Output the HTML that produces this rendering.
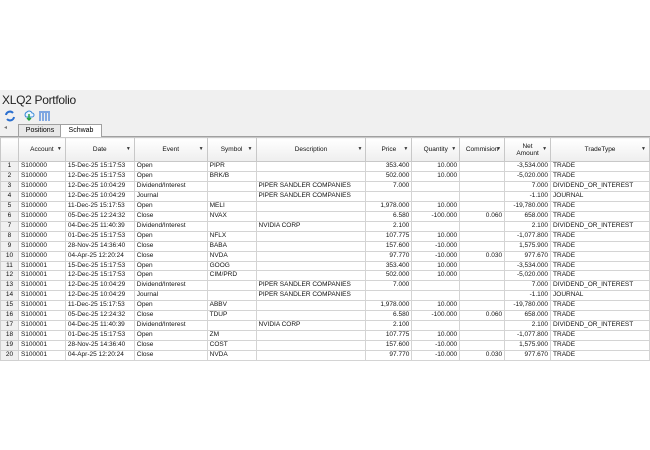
<!DOCTYPE html><html><head><style>
body{margin:0;width:650px;height:450px;background:#fff;font-family:"Liberation Sans",sans-serif;position:relative;overflow:hidden}
.app{position:absolute;left:0;top:90px;width:650px;height:270px;background:#f0f0f0}
.title{position:absolute;left:2px;top:93px;font-size:12px;color:#222;letter-spacing:-0.3px}
.tabs{position:absolute;left:0;top:123px;height:13px;width:650px;border-bottom:1px solid #a0a0a0}
.tab{position:absolute;top:1px;height:11px;font-size:7px;line-height:11px;text-align:center;border:1px solid #a0a0a0;border-bottom:none}
table{position:absolute;left:0;top:137px;border-collapse:collapse;font-size:6.5px;color:#111;table-layout:fixed;background:#fff}
td{border:1px solid #d4d4d4;height:8.95px;padding:0 2px;white-space:nowrap;overflow:hidden;line-height:8.95px}
th{height:23px;border:1px solid #c8c8c8;font-weight:normal;background:linear-gradient(#fff,#eee);position:relative;font-size:6.5px;padding:0}
th span.a{position:absolute;right:3px;top:8px;font-size:5px;color:#333}
td.n{text-align:center;background:#f0f0f0;border-color:#d0d0d0}
.r{text-align:right}
</style></head><body>
<div class="app"></div>
<div class="title">XLQ2 Portfolio</div>
<svg style="position:absolute;left:4px;top:110px" width="50" height="12">
<path d="M2 5a4 4 0 0 1 7-2M10 7a4 4 0 0 1-7 2" stroke="#2a6fd0" stroke-width="2" fill="none"/>
<path d="M22 7a3 3 0 0 1 1-5a3 3 0 0 1 5 1a2 2 0 0 1 0 4z" fill="#eaf6ff" stroke="#3a8ad8" stroke-width="1"/>
<path d="M25 4v6M23 8l2 2l2-2" stroke="#1fa040" stroke-width="1.4" fill="none"/>
<path d="M35 2h11M36 3v8M39 3v8M42 3v8M45 3v8" stroke="#3a7ad8" stroke-width="1.2"/>
</svg>
<div class="tabs">
<span style="position:absolute;left:4px;top:1px;font-size:6px;color:#777">◂</span>
<div class="tab" style="left:18px;width:42px;background:#e8e8e8">Positions</div>
<div class="tab" style="left:60px;width:40px;background:#fff;height:12px">Schwab</div>
</div>
<table>
<colgroup><col style="width:18px"><col style="width:47px"><col style="width:69px"><col style="width:73px"><col style="width:49px"><col style="width:110px"><col style="width:46px"><col style="width:48px"><col style="width:45px"><col style="width:46px"><col style="width:99px"></colgroup>
<tr><th></th><th>Account<span class="a">▼</span></th><th>Date<span class="a">▼</span></th><th>Event<span class="a">▼</span></th><th>Symbol<span class="a">▼</span></th><th>Description<span class="a">▼</span></th><th>Price<span class="a">▼</span></th><th>Quantity<span class="a">▼</span></th><th>Commision<span class="a">▼</span></th><th>Net<br>Amount<span class="a">▼</span></th><th>TradeType<span class="a">▼</span></th></tr>
<tr><td class="n">1</td><td>S100000</td><td>15-Dec-25 15:17:53</td><td>Open</td><td>PIPR</td><td></td><td class="r">353.400</td><td class="r">10.000</td><td></td><td class="r">-3,534.000</td><td>TRADE</td></tr>
<tr><td class="n">2</td><td>S100000</td><td>12-Dec-25 15:17:53</td><td>Open</td><td>BRK/B</td><td></td><td class="r">502.000</td><td class="r">10.000</td><td></td><td class="r">-5,020.000</td><td>TRADE</td></tr>
<tr><td class="n">3</td><td>S100000</td><td>12-Dec-25 10:04:29</td><td>Dividend/Interest</td><td></td><td>PIPER SANDLER COMPANIES</td><td class="r">7.000</td><td></td><td></td><td class="r">7.000</td><td>DIVIDEND_OR_INTEREST</td></tr>
<tr><td class="n">4</td><td>S100000</td><td>12-Dec-25 10:04:29</td><td>Journal</td><td></td><td>PIPER SANDLER COMPANIES</td><td></td><td></td><td></td><td class="r">-1.100</td><td>JOURNAL</td></tr>
<tr><td class="n">5</td><td>S100000</td><td>11-Dec-25 15:17:53</td><td>Open</td><td>MELI</td><td></td><td class="r">1,978.000</td><td class="r">10.000</td><td></td><td class="r">-19,780.000</td><td>TRADE</td></tr>
<tr><td class="n">6</td><td>S100000</td><td>05-Dec-25 12:24:32</td><td>Close</td><td>NVAX</td><td></td><td class="r">6.580</td><td class="r">-100.000</td><td class="r">0.060</td><td class="r">658.000</td><td>TRADE</td></tr>
<tr><td class="n">7</td><td>S100000</td><td>04-Dec-25 11:40:39</td><td>Dividend/Interest</td><td></td><td>NVIDIA CORP</td><td class="r">2.100</td><td></td><td></td><td class="r">2.100</td><td>DIVIDEND_OR_INTEREST</td></tr>
<tr><td class="n">8</td><td>S100000</td><td>01-Dec-25 15:17:53</td><td>Open</td><td>NFLX</td><td></td><td class="r">107.775</td><td class="r">10.000</td><td></td><td class="r">-1,077.800</td><td>TRADE</td></tr>
<tr><td class="n">9</td><td>S100000</td><td>28-Nov-25 14:36:40</td><td>Close</td><td>BABA</td><td></td><td class="r">157.600</td><td class="r">-10.000</td><td></td><td class="r">1,575.900</td><td>TRADE</td></tr>
<tr><td class="n">10</td><td>S100000</td><td>04-Apr-25 12:20:24</td><td>Close</td><td>NVDA</td><td></td><td class="r">97.770</td><td class="r">-10.000</td><td class="r">0.030</td><td class="r">977.670</td><td>TRADE</td></tr>
<tr><td class="n">11</td><td>S100001</td><td>15-Dec-25 15:17:53</td><td>Open</td><td>GOOG</td><td></td><td class="r">353.400</td><td class="r">10.000</td><td></td><td class="r">-3,534.000</td><td>TRADE</td></tr>
<tr><td class="n">12</td><td>S100001</td><td>12-Dec-25 15:17:53</td><td>Open</td><td>CIM/PRD</td><td></td><td class="r">502.000</td><td class="r">10.000</td><td></td><td class="r">-5,020.000</td><td>TRADE</td></tr>
<tr><td class="n">13</td><td>S100001</td><td>12-Dec-25 10:04:29</td><td>Dividend/Interest</td><td></td><td>PIPER SANDLER COMPANIES</td><td class="r">7.000</td><td></td><td></td><td class="r">7.000</td><td>DIVIDEND_OR_INTEREST</td></tr>
<tr><td class="n">14</td><td>S100001</td><td>12-Dec-25 10:04:29</td><td>Journal</td><td></td><td>PIPER SANDLER COMPANIES</td><td></td><td></td><td></td><td class="r">-1.100</td><td>JOURNAL</td></tr>
<tr><td class="n">15</td><td>S100001</td><td>11-Dec-25 15:17:53</td><td>Open</td><td>ABBV</td><td></td><td class="r">1,978.000</td><td class="r">10.000</td><td></td><td class="r">-19,780.000</td><td>TRADE</td></tr>
<tr><td class="n">16</td><td>S100001</td><td>05-Dec-25 12:24:32</td><td>Close</td><td>TDUP</td><td></td><td class="r">6.580</td><td class="r">-100.000</td><td class="r">0.060</td><td class="r">658.000</td><td>TRADE</td></tr>
<tr><td class="n">17</td><td>S100001</td><td>04-Dec-25 11:40:39</td><td>Dividend/Interest</td><td></td><td>NVIDIA CORP</td><td class="r">2.100</td><td></td><td></td><td class="r">2.100</td><td>DIVIDEND_OR_INTEREST</td></tr>
<tr><td class="n">18</td><td>S100001</td><td>01-Dec-25 15:17:53</td><td>Open</td><td>ZM</td><td></td><td class="r">107.775</td><td class="r">10.000</td><td></td><td class="r">-1,077.800</td><td>TRADE</td></tr>
<tr><td class="n">19</td><td>S100001</td><td>28-Nov-25 14:36:40</td><td>Close</td><td>COST</td><td></td><td class="r">157.600</td><td class="r">-10.000</td><td></td><td class="r">1,575.900</td><td>TRADE</td></tr>
<tr><td class="n">20</td><td>S100001</td><td>04-Apr-25 12:20:24</td><td>Close</td><td>NVDA</td><td></td><td class="r">97.770</td><td class="r">-10.000</td><td class="r">0.030</td><td class="r">977.670</td><td>TRADE</td></tr>
</table>
</body></html>
